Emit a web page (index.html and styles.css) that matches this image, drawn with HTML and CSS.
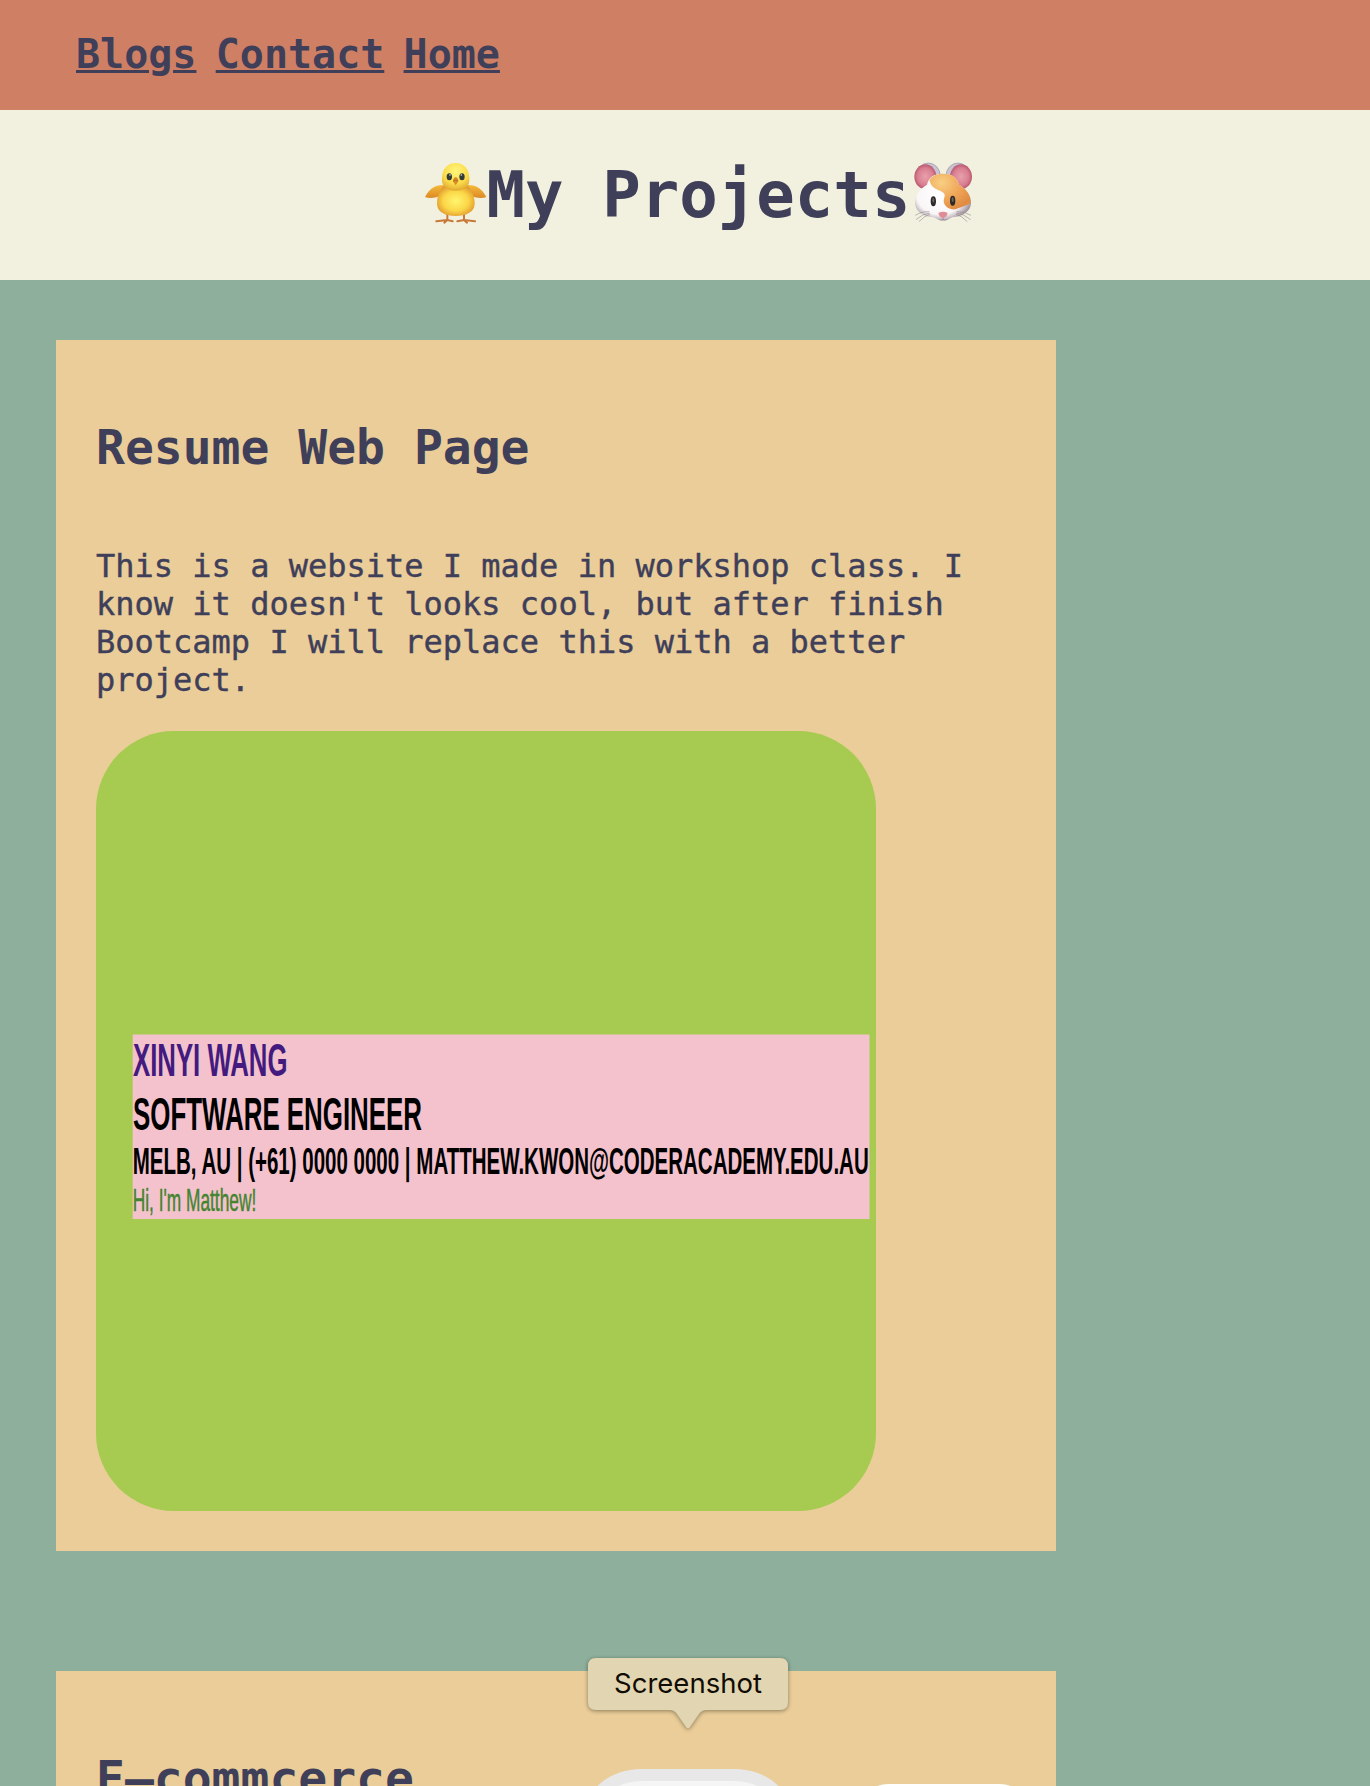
FILE: index.html
```html
<!DOCTYPE html>
<html lang="en">
<head>
<meta charset="utf-8">
<title>My Projects</title>
<link rel="stylesheet" href="styles.css">
</head>
<body>
<nav class="nav">
  <a href="#">Blogs</a>
  <a href="#">Contact</a>
  <a href="#">Home</a>
</nav>
<header class="banner">
  <h1 class="title">
    <svg class="emoji" viewBox="36 60 192 192" aria-hidden="true">
      <defs>
        <radialGradient id="chickHead" cx=".5" cy=".3" r=".7"><stop offset="0" stop-color="#fff67a"/><stop offset=".65" stop-color="#fbdb4b"/><stop offset="1" stop-color="#e2ab32"/></radialGradient>
        <radialGradient id="chickBody" cx=".5" cy=".5" r=".55"><stop offset="0" stop-color="#fff56f"/><stop offset=".6" stop-color="#fbd748"/><stop offset="1" stop-color="#e29b2f"/></radialGradient>
        <linearGradient id="wing" x1="0" y1="0" x2="0" y2="1"><stop offset="0" stop-color="#f4bb3c"/><stop offset="1" stop-color="#dd8a25"/></linearGradient>
      </defs>
      <g fill="none" stroke="#c87838" stroke-width="6" stroke-linecap="round" stroke-linejoin="round">
        <path d="M109 222V240L76 244M109 240L100 248M109 240L125 244"/>
        <path d="M159 222V240L192 244M159 240L168 248M159 240L139 244"/>
      </g>
      <path d="M98 135C72 134 53 148 42 171C55 176 78 174 92 164Z" fill="url(#wing)"/>
      <path d="M170 135C196 134 214 148 226 171C213 176 190 174 176 164Z" fill="url(#wing)"/>
      <path d="M96 138C84 156 77 174 78 192C79 217 104 228 134 228C164 228 190 217 191 192C192 174 184 156 172 138Z" fill="url(#chickBody)"/>
      <path d="M134 69C108 69 94 88 93 113C91 138 105 151 134 152C163 151 177 138 175 113C174 88 160 69 134 69Z" fill="url(#chickHead)"/>
      <ellipse cx="115" cy="110" rx="8" ry="10.500" fill="#343b36"/><ellipse cx="153" cy="110" rx="8" ry="10.500" fill="#343b36"/>
      <circle cx="117" cy="105" r="2.500" fill="#d8e2d5"/><circle cx="151" cy="105" r="2.500" fill="#d8e2d5"/>
      <path d="M134 111C128 113 125 120 126 124L134 136L142 124C143 120 140 113 134 111Z" fill="#d88a25"/>
      <path d="M127 123Q134 117 141 123" fill="none" stroke="#a9621b" stroke-width="2"/>
    </svg>
    <span>My Projects</span>
    <svg class="emoji" viewBox="60 60 192 192" aria-hidden="true">
      <defs>
        <radialGradient id="ear"><stop offset="0" stop-color="#e8a0ac"/><stop offset=".7" stop-color="#d97f91"/><stop offset="1" stop-color="#b95971"/></radialGradient>
        <radialGradient id="face" cx=".45" cy=".45" r=".58"><stop offset="0" stop-color="#fff"/><stop offset=".72" stop-color="#faf6f7"/><stop offset="1" stop-color="#a3959f"/></radialGradient>
        <radialGradient id="patch" cx=".3" cy=".25" r=".8"><stop offset="0" stop-color="#f8cf83"/><stop offset=".6" stop-color="#efa456"/><stop offset="1" stop-color="#e08c42"/></radialGradient>
      </defs>
      <ellipse cx="115" cy="108" rx="36" ry="39" fill="#c8c4d2" stroke="#85818f" stroke-width="1.5"/>
      <ellipse cx="204" cy="108" rx="36" ry="39" fill="#c8c4d2" stroke="#85818f" stroke-width="1.5"/>
      <ellipse cx="106" cy="110" rx="33" ry="37" fill="url(#ear)"/>
      <ellipse cx="213" cy="110" rx="33" ry="37" fill="url(#ear)"/>
      <path d="M159 101C130 101 116 112 111 134C89 147 75 165 75 188C75 214 99 229 131 232Q159 252 187 232C219 229 243 213 243 188C243 165 229 147 207 134C201 112 187 101 159 101Z" fill="url(#face)"/>
      <path d="M118 120C126 107 140 101 159 101C187 101 201 112 207 134C229 147 243 165 242 190C225 199 207 203 197 208C180 211 161 199 161 183C162 171 168 165 160 158C150 149 126 151 118 120Z" fill="url(#patch)"/>
      <ellipse cx="130" cy="184" rx="8" ry="15" fill="#2d2b29"/><ellipse cx="188" cy="182" rx="8" ry="15" fill="#2d2b29"/>
      <ellipse cx="130" cy="181" rx="3" ry="7" fill="#69645d"/><ellipse cx="188" cy="179" rx="3" ry="7" fill="#69645d"/>
      <path d="M145 219Q159 212 173 219Q170 232 159 235Q148 232 145 219Z" fill="#df8c96"/>
      <path d="M159 234V240M148 238Q154 243 159 238Q164 243 171 238" fill="none" stroke="#8f858b" stroke-width="2"/>
      <path d="M118 215Q94 214 76 226M119 219Q96 222 78 239M120 223Q102 228 87 245M200 215Q224 214 243 226M199 219Q222 222 242 239M198 223Q216 228 232 245" fill="none" stroke="#88807f" stroke-width="1.6"/>
    </svg>
  </h1>
</header>
<main class="projects">
  <section class="card">
    <h2>Resume Web Page</h2>
    <p>This is a website I made in workshop class. I know it doesn't looks cool, but after finish Bootcamp I will replace this with a better project.</p>
    <svg class="preview" viewBox="0 0 780 780" role="img" aria-label="Resume page preview">
      <rect width="780" height="780" fill="#a6cb50"/>
      <rect x="36.700" y="303.500" width="736.800" height="184.500" fill="#f4c2cc"/>
      <g class="resume">
        <text class="strong" x="37" y="345" font-size="47" textLength="154.500" lengthAdjust="spacingAndGlyphs" fill="#431a80">XINYI WANG</text>
        <text class="strong" x="37" y="399" font-size="47" textLength="289" lengthAdjust="spacingAndGlyphs">SOFTWARE ENGINEER</text>
        <text class="strong" x="36.700" y="443.300" font-size="37.500" textLength="736" lengthAdjust="spacingAndGlyphs">MELB, AU | (+61) 0000 0000 | MATTHEW.KWON@CODERACADEMY.EDU.AU</text>
        <text class="plain" x="36.700" y="480.300" font-size="32" textLength="123.500" lengthAdjust="spacingAndGlyphs">Hi, I'm Matthew!</text>
      </g>
    </svg>
  </section>
  <section class="card">
    <h2>E–commcerce</h2>
  </section>
</main>
<div class="tooltip">
  <svg class="bubble" viewBox="0 0 200 72" aria-hidden="true"><path d="M8 0H192Q200 0 200 8V44Q200 52 192 52H118Q114 52 111 56L102 69Q100 71.500 98 69L89 56Q86 52 82 52H8Q0 52 0 44V8Q0 0 8 0Z"/></svg>
  <span class="label">Screenshot</span>
</div>
<div class="dock-icon dock-gray"><div class="dock-inner"></div></div>
<div class="dock-icon dock-white"></div>
</body>
</html>
```
FILE: styles.css
```css
* { box-sizing: border-box; }

html {
  height: 100%;
  overflow: hidden;
}

body {
  position: relative;
  height: 1786px;
  margin: 0;
  overflow: hidden;
  background: #8daf9b;
  color: #3f3f5a;
  font: 32px/38px "DejaVu Sans Mono", monospace;
}

.nav {
  display: flex;
  gap: 19.300px;
  height: 110px;
  padding: 31px 76px 0;
  background: #cf7f63;
  font-size: 40px;
  line-height: 46px;
  font-weight: 700;
}

.nav a {
  color: inherit;
  text-underline-offset: 2px;
  text-decoration-thickness: 2.5px;
}

.banner {
  height: 170px;
  padding: 48px 0 0 27px;
  background: #f2f1df;
}

.title {
  display: flex;
  justify-content: center;
  margin: 0;
  font-size: 64px;
  line-height: 75px;
}

.emoji {
  width: 64px;
  height: 64px;
  margin-top: 2px;
}

.projects {
  display: flex;
  flex-direction: column;
  gap: 120px;
  padding: 60px 56px;
}

.card {
  width: 1000px;
  padding: 40px;
  background: #eacd98;
}

.card h2 {
  margin: 39px 0 72px;
  font-size: 48px;
  line-height: 56px;
}

.card p {
  margin: 0 0 32px;
  -webkit-text-stroke: .4px currentColor;
}

.preview {
  display: block;
  width: 780px;
  height: 780px;
  border-radius: 78px;
}

.resume {
  font-family: "Liberation Sans", Arial, sans-serif;
}

.strong {
  font-weight: 700;
}

.plain {
  fill: #42842f;
  stroke: #42842f;
  stroke-width: .5px;
}

.tooltip {
  position: absolute;
  left: 588px;
  top: 1658px;
  width: 200px;
  height: 52px;
}

.bubble {
  position: absolute;
  inset: 0 auto auto 0;
  width: 200px;
  height: 72px;
  overflow: visible;
  fill: #e2d5b2;
  filter: drop-shadow(0 1px 2px rgba(0, 0, 0, .4));
}

.label {
  position: relative;
  display: block;
  color: #100c04;
  font: 27.500px/50px Inter, sans-serif;
  text-align: center;
}

.dock-icon {
  position: absolute;
  border-radius: 50px 50px 0 0 / 44px 44px 0 0;
}

.dock-gray {
  left: 585px;
  top: 1769px;
  width: 206px;
  height: 17px;
  padding: 12px 12px 0;
  overflow: hidden;
  border-radius: 0;
}

.dock-gray::before {
  position: absolute;
  inset: 0 0 auto;
  height: 200px;
  border-radius: 56px / 46px;
  background: #e8e8e8;
  content: "";
}

.dock-inner {
  position: relative;
  height: 176px;
  border-radius: 44px / 36px;
  background: #f5f5f5;
}

.dock-white {
  left: 854px;
  top: 1784px;
  width: 180px;
  height: 2px;
  overflow: hidden;
  border-radius: 0;
}

.dock-white::before {
  position: absolute;
  inset: 0 0 auto;
  height: 180px;
  border-radius: 34px / 40px;
  background: #fff;
  content: "";
}
```
